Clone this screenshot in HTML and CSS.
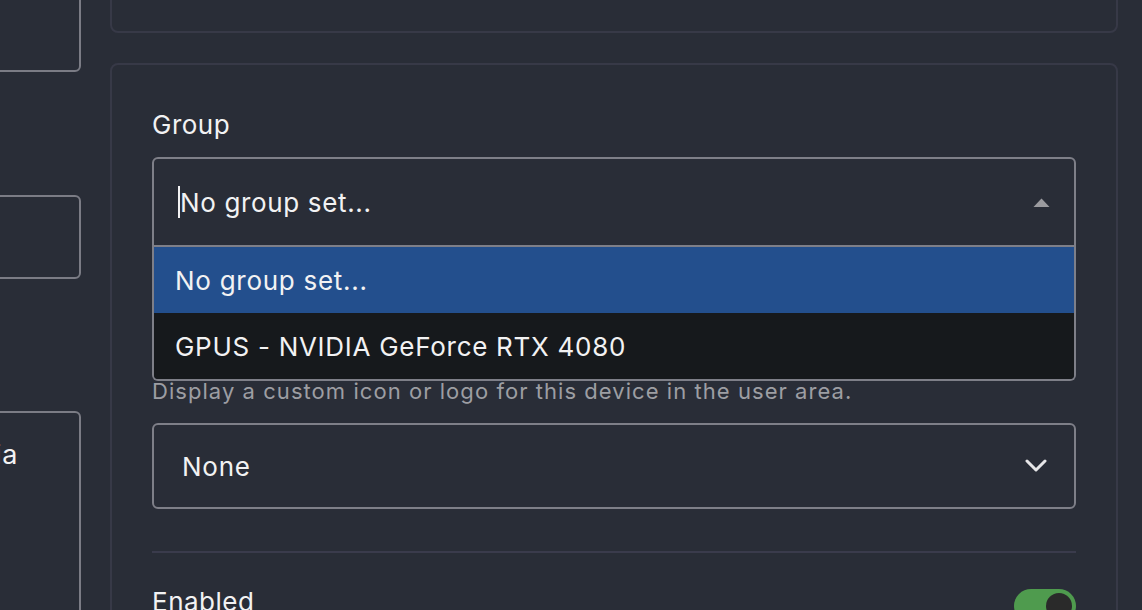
FILE: index.html
```html
<!DOCTYPE html>
<html lang="en">
<head>
<meta charset="utf-8">
<title>Device settings</title>
<link rel="stylesheet" href="styles.css">
</head>
<body>
<div class="page">
  <aside class="side">
    <div class="box box-a"></div>
    <div class="box box-b"></div>
    <div class="box box-c"><span class="box-text">Media</span></div>
  </aside>
  <main class="main">
    <section class="card card-top"></section>
    <section class="card card-form">
      <div class="field">
        <div class="label">Group</div>
        <div class="combo">
          <div class="combo-control">
            <span class="caret"></span><span class="combo-value">No group set...</span>
            <svg class="tri" width="17" height="9" viewBox="0 0 17 9"><path d="M8.5 0.5 L16.5 9 L0.5 9 Z" fill="#9b9b9f"/></svg>
          </div>
          <ul class="menu">
            <li class="opt opt-active">No group set...</li>
            <li class="opt">GPUS - NVIDIA GeForce RTX 4080</li>
          </ul>
        </div>
      </div>
      <div class="field field-icon">
        <div class="label">Icon</div>
        <div class="desc">Display a custom icon or logo for this device in the user area.</div>
        <div class="select">
          <span>None</span>
          <svg class="chev" width="22" height="14" viewBox="0 0 22 14"><path d="M2 2 L11 11 L20 2" fill="none" stroke="#e6e6e8" stroke-width="3" stroke-linecap="round" stroke-linejoin="round"/></svg>
        </div>
      </div>
      <div class="divider"></div>
      <div class="row">
        <span class="label">Enabled</span>
        <span class="toggle"><span class="knob"></span></span>
      </div>
    </section>
  </main>
</div>
</body>
</html>
```
FILE: styles.css
```css
html, body {
  margin: 0;
  padding: 0;
}
body {
  background: #292d37;
  color: #f2f2f3;
  font-family: Inter, "Noto Sans", "Liberation Sans", sans-serif;
  height: 610px;
  overflow: hidden;
}
.page {
  display: flex;
  align-items: flex-start;
  gap: 29px;
  padding-right: 24px;
}
.side {
  width: 160px;
  margin-left: -79px;
  flex: none;
  display: flex;
  flex-direction: column;
}
.box {
  box-sizing: border-box;
  border: 2px solid #7b7c85;
  border-radius: 6px;
}
.box-a {
  height: 100px;
  margin-top: -28px;
}
.box-b {
  height: 84px;
  margin-top: 123px;
}
.box-c {
  height: 300px;
  margin-top: 132px;
  padding: 26px 0 0 13px;
  font-size: 27px;
  line-height: 32px;
  letter-spacing: 0.75px;
  white-space: nowrap;
}
.main {
  flex: 1;
  display: flex;
  flex-direction: column;
  gap: 30px;
  margin-top: -67px;
}
.card {
  box-sizing: border-box;
  border: 2px solid #373947;
  border-radius: 8px;
}
.card-top {
  height: 100px;
}
.card-form {
  padding: 44px 40px 0 40px;
  height: 700px;
}
.label {
  font-size: 26px;
  line-height: 32px;
  letter-spacing: 0.5px;
  color: #f2f2f3;
}
.combo {
  position: relative;
  margin-top: 16px;
}
.combo-control {
  box-sizing: border-box;
  height: 90px;
  border: 2px solid #7e7f88;
  border-radius: 6px 6px 0 0;
  display: flex;
  align-items: center;
  padding: 0 24px;
  font-size: 26px;
  letter-spacing: 0.65px;
}
.caret {
  width: 2px;
  height: 32px;
  background: #f2f2f3;
}
.combo-value {
  flex: 1;
}
.menu {
  position: absolute;
  top: 100%;
  left: 0;
  right: 0;
  margin: 0;
  padding: 0;
  list-style: none;
  border: 2px solid #7e7f88;
  border-top: none;
  border-radius: 0 0 6px 6px;
  overflow: hidden;
  z-index: 2;
}
.opt {
  height: 66px;
  display: flex;
  align-items: center;
  padding-left: 21px;
  font-size: 26px;
  letter-spacing: 0.72px;
  background: #16191c;
  color: #f2f2f3;
}
.opt-active {
  background: #234f8d;
}
.field-icon {
  margin-top: 94px;
}
.desc {
  margin-top: 4px;
  font-size: 22px;
  line-height: 28px;
  letter-spacing: 1.05px;
  color: #9d9ea3;
}
.select {
  box-sizing: border-box;
  height: 86px;
  margin-top: 18px;
  border: 2px solid #7e7f88;
  border-radius: 6px;
  display: flex;
  align-items: center;
  justify-content: space-between;
  padding: 0 27px 0 28px;
  font-size: 26px;
  letter-spacing: 0.75px;
}
.divider {
  height: 2px;
  margin-top: 42px;
  background: #3a3b4c;
}
.row {
  display: flex;
  justify-content: space-between;
  align-items: flex-start;
  margin-top: 33px;
}
.toggle {
  box-sizing: border-box;
  width: 62px;
  height: 34px;
  margin-top: 3px;
  border-radius: 17px;
  background: #4f9b4e;
  padding: 4px;
  display: flex;
  justify-content: flex-end;
}
.knob {
  width: 26px;
  height: 26px;
  border-radius: 50%;
  background: #2a2a2a;
}
```
